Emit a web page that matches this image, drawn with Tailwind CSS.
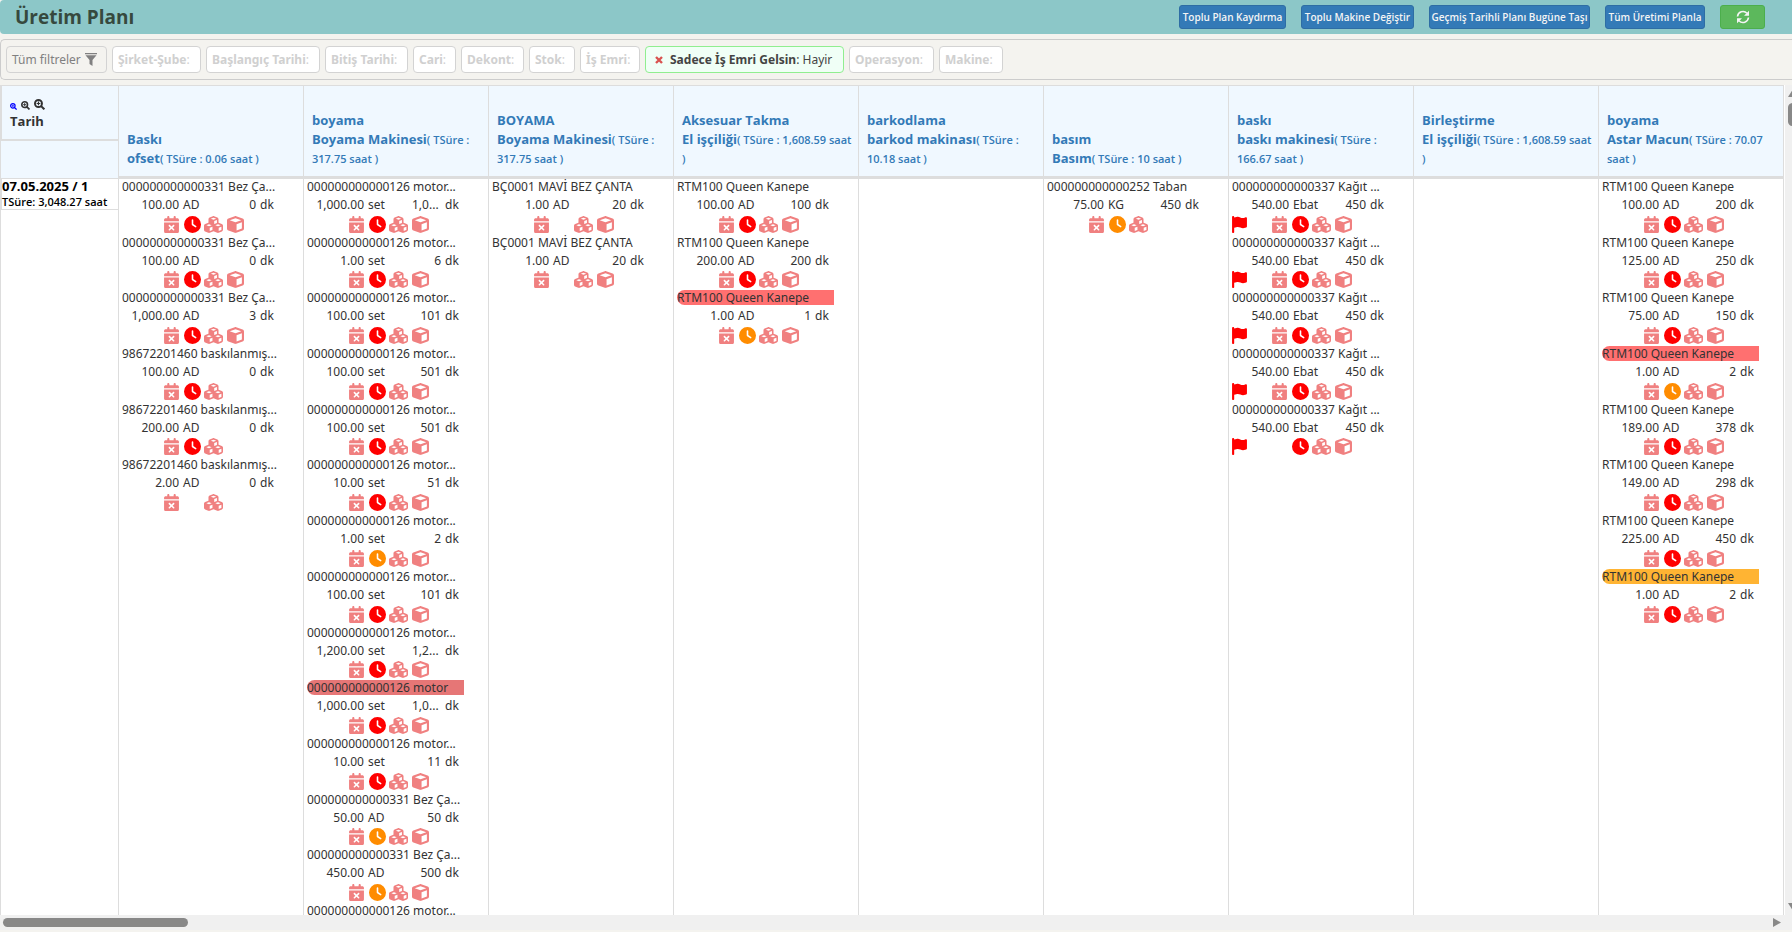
<!DOCTYPE html>
<html lang="tr">
<head>
<meta charset="utf-8">
<title>Üretim Planı</title>
<script src="https://cdn.jsdelivr.net/npm/@tailwindcss/browser@4"></script>
</head>
<body class="bg-[#f4f3ef] text-[#333] font-['Noto_Sans','Open_Sans',sans-serif]">
<svg class="hidden" aria-hidden="true">
  <symbol id="clock" viewBox="0 0 512 512"><path d="M256 0a256 256 0 1 1 0 512A256 256 0 1 1 256 0zM232 120V256c0 8 4 15.500 10.700 20l96 64c11 7.400 25.900 4.400 33.300-6.700s4.400-25.900-6.700-33.300L280 243.200V120c0-13.300-10.700-24-24-24s-24 10.700-24 24z"/></symbol>
  <symbol id="calendar" viewBox="0 0 448 512"><path d="M128 0c17.700 0 32 14.300 32 32V64H288V32c0-17.700 14.300-32 32-32s32 14.300 32 32V64h48c26.500 0 48 21.500 48 48v48H0V112C0 85.500 21.500 64 48 64H96V32c0-17.700 14.300-32 32-32zM0 192H448V464c0 26.500-21.500 48-48 48H48c-26.500 0-48-21.500-48-48V192zM305 305c9.400-9.400 9.400-24.600 0-33.900s-24.600-9.400-33.900 0l-47 47-47-47c-9.400-9.400-24.600-9.400-33.900 0s-9.400 24.600 0 33.900l47 47-47 47c-9.400 9.400-9.400 24.600 0 33.900s24.600 9.400 33.900 0l47-47 47 47c9.400 9.400 24.600 9.400 33.900 0s9.400-24.600 0-33.900l-47-47 47-47z"/></symbol>
  <symbol id="flag" viewBox="0 0 448 512"><path d="M64 32C64 14.300 49.700 0 32 0S0 14.300 0 32V480c0 17.700 14.300 32 32 32s32-14.300 32-32V352l64.300-16.100c41.100-10.300 84.600-5.500 122.500 13.400c44.200 22.100 95.500 24.800 141.700 7.400l34.700-13c12.500-4.700 20.800-16.600 20.800-30V66.100c0-23-24.200-38-44.800-27.700l-9.600 4.800c-46.300 23.200-100.800 23.200-147.100 0c-35.100-17.600-75.400-22-113.500-12.500L64 48V32z"/></symbol>
  <symbol id="cube" viewBox="0 0 512 512"><path d="M234.500 5.700c13.900-5 29.100-5 43.100 0l192 68.600C495 83.400 512 107.500 512 134.600V377.400c0 27-17 51.200-42.500 60.300l-192 68.600c-13.900 5-29.100 5-43.100 0l-192-68.600C17 428.600 0 404.500 0 377.400V134.600c0-27 17-51.200 42.500-60.300l192-68.600zM256 66L82.300 128 256 190l173.700-62L256 66zm32 368.600l160-57.100v-188L288 246.600v188z"/></symbol>
  <symbol id="cubes" viewBox="0 0 576 512"><path d="M290.800 48.600l78.400 29.700L288 109.500 206.800 78.300l78.400-29.700c1.800-.7 3.800-.7 5.700 0zM136 92.500V204.700c-1.300 .4-2.600 .8-3.900 1.300l-96 36.400C14.400 250.600 0 271.500 0 294.700V413.900c0 22.200 13.100 42.300 33.500 51.300l96 42.200c14.400 6.300 30.700 6.300 45.100 0L288 457.500l113.500 49.900c14.400 6.300 30.700 6.300 45.100 0l96-42.200c20.300-8.900 33.500-29.100 33.500-51.300V294.700c0-23.300-14.400-44.100-36.100-52.400l-96-36.400c-1.300-.5-2.600-.9-3.900-1.300V92.500c0-23.300-14.400-44.100-36.100-52.400l-96-36.400c-12.800-4.800-26.900-4.800-39.700 0l-96 36.400C150.400 48.400 136 69.300 136 92.500zM392 210.600l-82.400 31.200V152.600L392 121v89.600zM154.800 250.900l78.400 29.700L152 311.700 70.800 280.600l78.400-29.700c1.800-.7 3.800-.7 5.700 0zm18.800 204.400V354.800L256 323.200v95.900l-82.400 36.200zM421.200 250.900c1.800-.7 3.800-.7 5.700 0l78.400 29.700L424 311.700l-81.200-31.100 78.400-29.700zM523.200 421.200l-77.600 34.100V354.800L528 323.200v90.700c0 3.200-1.900 6-4.800 7.300z"/></symbol>
  <symbol id="zoom" viewBox="0 0 16 16"><path fill="none" stroke="currentColor" stroke-width="3" d="M10 10 15 15"/><circle cx="6.500" cy="6.500" r="5.100" fill="none" stroke="currentColor" stroke-width="2.800"/><path fill="none" stroke="currentColor" stroke-width="1.700" d="M3.800 6.500h5.400M6.500 3.800v5.400"/></symbol>
</svg>

<div class="flex h-screen flex-col overflow-hidden">
  <header class="flex h-[34px] shrink-0 items-center justify-between rounded-l bg-[#8cc7c8] pr-[27px] pl-[15px]">
    <h1 class="font-['Open_Sans',sans-serif] text-[19px] font-bold text-[#36493e]">Üretim Planı</h1>
    <div class="flex gap-[15px] font-['Open_Sans',sans-serif] text-[10px] font-semibold text-[#f4f4f4]">
      <button class="h-6 w-[107px] rounded-[3px] border border-[#2e6da4] bg-[#337ab7] whitespace-nowrap">Toplu Plan Kaydırma</button>
      <button class="h-6 w-[113px] rounded-[3px] border border-[#2e6da4] bg-[#337ab7] whitespace-nowrap">Toplu Makine Değiştir</button>
      <button class="h-6 w-[161px] rounded-[3px] border border-[#2e6da4] bg-[#337ab7] whitespace-nowrap">Geçmiş Tarihli Planı Bugüne Taşı</button>
      <button class="h-6 w-[100px] rounded-[3px] border border-[#2e6da4] bg-[#337ab7] whitespace-nowrap">Tüm Üretimi Planla</button>
      <button aria-label="Yenile" class="flex h-6 w-[45px] items-center justify-center rounded-[3px] border border-[#4cae4c] bg-[#5cb85c]">
        <svg class="size-[14px]" viewBox="0 0 14 14" fill="none" stroke="currentColor" stroke-width="1.600"><path d="M1.500 6.500A5.500 5.500 0 0 1 11 3.300M12.500 7.500A5.500 5.500 0 0 1 3 10.700"/><path fill="currentColor" stroke="none" d="M13 .8v5H8zM1 13.200v-5h5z"/></svg>
      </button>
    </div>
  </header>

  <div class="mt-[5px] flex h-[41px] shrink-0 items-center gap-[5px] rounded-l-[5px] border border-r-0 border-[#ccc] pl-[5px] text-xs whitespace-nowrap text-[#d0d0d0]">
    <button class="flex h-[27px] w-[101px] items-center gap-1 rounded border border-[#d3d3d3] px-[5px] text-[#808080]">Tüm filtreler
      <svg class="h-[13px] w-3 shrink-0" viewBox="0 0 12 13" fill="currentColor"><path d="M0 0h12v1.200H0zM.5 2.200h11L7.500 7v6l-3-2V7z"/></svg>
    </button>
    <button class="h-[27px] w-[89px] rounded border border-[#d3d3d3] bg-white px-[5px] text-left"><b>Şirket-Şube</b>:</button>
    <button class="h-[27px] w-[114px] rounded border border-[#d3d3d3] bg-white px-[5px] text-left"><b>Başlangıç Tarihi</b>:</button>
    <button class="h-[27px] w-[83px] rounded border border-[#d3d3d3] bg-white px-[5px] text-left"><b>Bitiş Tarihi</b>:</button>
    <button class="h-[27px] w-[43px] rounded border border-[#d3d3d3] bg-white px-[5px] text-left"><b>Cari</b>:</button>
    <button class="h-[27px] w-[63px] rounded border border-[#d3d3d3] bg-white px-[5px] text-left"><b>Dekont</b>:</button>
    <button class="h-[27px] w-[46px] rounded border border-[#d3d3d3] bg-white px-[5px] text-left"><b>Stok</b>:</button>
    <button class="h-[27px] w-[60px] rounded border border-[#d3d3d3] bg-white px-[5px] text-left"><b>İş Emri</b>:</button>
    <button class="flex h-[27px] w-[199px] items-center rounded border border-[#90ee90] bg-[#f0fff6] pl-[9px] text-[#444]">
      <svg class="mr-[7px] size-2 shrink-0" viewBox="0 0 8 8" stroke="#d9534f" stroke-width="2.400"><path d="m1 1 6 6M7 1 1 7"/></svg><b>Sadece İş Emri Gelsin</b>:&nbsp;Hayir</button>
    <button class="h-[27px] w-[85px] rounded border border-[#d3d3d3] bg-white px-[5px] text-left"><b>Operasyon</b>:</button>
    <button class="h-[27px] w-[64px] rounded border border-[#d3d3d3] bg-white px-[5px] text-left"><b>Makine</b>:</button>
  </div>

  <main class="mt-[5px] flex min-h-0 flex-1">
    <div class="min-w-0 flex-1 overflow-hidden bg-white">
      <table class="w-[1784px] table-fixed border-separate border-spacing-0 border-t border-[#ddd]">
        <colgroup><col class="w-[118px]"><col class="w-[185px]" span="8"><col class="w-[186px]"></colgroup>
        <thead class="bg-[#f0f8ff] text-left font-['Open_Sans',sans-serif] text-[13px] leading-[19px]">
          <tr id="columns">
            <th class="h-[55px] border-b-2 border-l-2 border-[#ddd] px-2 align-bottom">
              <div class="mb-[2px] flex items-end gap-1">
                <svg class="size-[7px] text-[#00f]"><use href="#zoom"/></svg>
                <svg class="size-[9px]"><use href="#zoom"/></svg>
                <svg class="size-[11px]"><use href="#zoom"/></svg>
              </div>
              <div class="pb-2">Tarih</div>
            </th>
          </tr>
          <tr><td class="h-[38px] border-b border-l border-[#ddd]"></td></tr>
        </thead>
        <tbody>
          <tr id="plan">
            <td class="border-l border-[#ddd] p-0 align-top">
              <div class="h-[31px] border-b border-l border-[#ddd] font-['Open_Sans',sans-serif] font-bold whitespace-nowrap text-black">
                <div class="text-[13px] leading-[15px]">07.05.2025 / 1</div>
                <div class="text-[11px] leading-[15px] font-semibold">TSüre: 3,048.27 saat</div>
              </div>
            </td>
          </tr>
        </tbody>
      </table>
    </div>
    <div class="w-[7px] shrink-0 overflow-hidden bg-[#f0f0f0]">
      <div class="ml-[3px] flex h-full w-[9px] flex-col pt-[5px] pb-[5px]">
        <svg class="h-[7px] w-[9px] shrink-0" viewBox="0 0 9 7" fill="#888"><path d="M4.500 0 9 7H0z"/></svg>
        <div class="mt-[6px] h-[23px] w-[9px] shrink-0 rounded-full bg-[#888]"></div>
        <svg class="mt-auto h-[7px] w-[9px] shrink-0" viewBox="0 0 9 7" fill="#888"><path d="M0 0h9L4.500 7z"/></svg>
      </div>
    </div>
  </main>
  <div class="mb-[2px] flex h-[15px] shrink-0 items-center justify-between bg-[#f0f0f0] pr-[11px] pl-[3px]">
    <div class="h-[9px] w-[185px] rounded-full bg-[#888]"></div>
    <svg class="h-[9px] w-2" viewBox="0 0 8 9" fill="#888"><path d="M0 0 8 4.500 0 9z"/></svg>
  </div>
</div>

<template id="item">
  <div>
    <div data-part="title" class="mb-px h-[15px] w-[157px] overflow-hidden leading-[15px] whitespace-nowrap"></div>
    <div class="flex leading-[1.725] whitespace-nowrap">
      <span data-part="amount" class="flex w-[57px] justify-end"></span>
      <span data-part="unit" class="ml-1 w-[44px]"></span>
      <span data-part="time" class="w-[29px] text-right"></span>
      <span class="ml-1">dk</span>
    </div>
    <div class="flex h-[19px] text-[#f08080]">
      <svg data-part="flag" class="mr-[25px] h-[17px] w-[15px] text-[#f00] [&.invisible]:mr-[27px]" fill="currentColor"><use href="#flag"/></svg>
      <svg data-part="calendar" class="mr-[5px] h-[17px] w-[15px]" fill="currentColor"><use href="#calendar"/></svg>
      <svg data-part="clock" class="mr-[3px] h-[17px] w-[17px]" fill="currentColor"><use href="#clock"/></svg>
      <svg data-part="cubes" class="mr-1 h-[17px] w-[19px]" fill="currentColor"><use href="#cubes"/></svg>
      <svg data-part="cube" class="h-[17px] w-[17px]" fill="currentColor"><use href="#cube"/></svg>
    </div>
  </div>
</template>

<script>
  // Item: title, amount, unit, minutes, icons (f flag, k calendar, r red clock, o orange clock, s cubes, c cube), highlight
  const bez = '000000000000331 Bez Ça...', motor = '000000000000126 motor...', bas = '98672201460 baskılanmış...',
        rtm = 'RTM100 Queen Kanepe', canta = 'BÇ0001 MAVİ BEZ ÇANTA', kagit = '000000000000337 Kağıt ...';
  const columns = [
    { head: ['Baskı', 'ofset', '( TSüre : 0.06 saat )', ''], items: [
      [bez, '100.00', 'AD', '0', 'krsc'], [bez, '100.00', 'AD', '0', 'krsc'], [bez, '1,000.00', 'AD', '3', 'krsc'],
      [bas, '100.00', 'AD', '0', 'krs'], [bas, '200.00', 'AD', '0', 'krs'], [bas, '2.00', 'AD', '0', 'ks']] },
    { head: ['boyama', 'Boyama Makinesi', '( TSüre :', '317.75 saat )'], items: [
      [motor, '1,000.00', 'set', '1,0...', 'krsc'], [motor, '1.00', 'set', '6', 'krsc'], [motor, '100.00', 'set', '101', 'krsc'],
      [motor, '100.00', 'set', '501', 'krsc'], [motor, '100.00', 'set', '501', 'krsc'], [motor, '10.00', 'set', '51', 'krsc'],
      [motor, '1.00', 'set', '2', 'kosc'], [motor, '100.00', 'set', '101', 'krsc'], [motor, '1,200.00', 'set', '1,2...', 'krsc'],
      ['000000000000126 motor', '1,000.00', 'set', '1,0...', 'krsc', 'bg-[#e67676]'], [motor, '10.00', 'set', '11', 'krsc'],
      [bez, '50.00', 'AD', '50', 'kosc'], [bez, '450.00', 'AD', '500', 'kosc'], [motor, '', '', '', '']] },
    { head: ['BOYAMA', 'Boyama Makinesi', '( TSüre :', '317.75 saat )'], items: [
      [canta, '1.00', 'AD', '20', 'ksc'], [canta, '1.00', 'AD', '20', 'ksc']] },
    { head: ['Aksesuar Takma', 'El işçiliği', '( TSüre : 1,608.59 saat', ')'], items: [
      [rtm, '100.00', 'AD', '100', 'krsc'], [rtm, '200.00', 'AD', '200', 'krsc'], [rtm, '1.00', 'AD', '1', 'kosc', 'bg-[#ff7070]']] },
    { head: ['barkodlama', 'barkod makinası', '( TSüre :', '10.18 saat )'], items: [] },
    { head: ['basım', 'Basım', '( TSüre : 10 saat )', ''], items: [
      ['000000000000252 Taban', '75.00', 'KG', '450', 'kos']] },
    { head: ['baskı', 'baskı makinesi', '( TSüre :', '166.67 saat )'], items: [
      [kagit, '540.00', 'Ebat', '450', 'fkrsc'], [kagit, '540.00', 'Ebat', '450', 'fkrsc'], [kagit, '540.00', 'Ebat', '450', 'fkrsc'],
      [kagit, '540.00', 'Ebat', '450', 'fkrsc'], [kagit, '540.00', 'Ebat', '450', 'frsc']] },
    { head: ['Birleştirme', 'El işçiliği', '( TSüre : 1,608.59 saat', ')'], items: [] },
    { head: ['boyama', 'Astar Macun', '( TSüre : 70.07', 'saat )'], items: [
      [rtm, '100.00', 'AD', '200', 'krsc'], [rtm, '125.00', 'AD', '250', 'krsc'], [rtm, '75.00', 'AD', '150', 'krsc'],
      [rtm, '1.00', 'AD', '2', 'kosc', 'bg-[#ff7070]'], [rtm, '189.00', 'AD', '378', 'krsc'], [rtm, '149.00', 'AD', '298', 'krsc'],
      [rtm, '225.00', 'AD', '450', 'krsc'], [rtm, '1.00', 'AD', '2', 'krsc', 'bg-[#ffb433]']] },
  ];
  const iconKeys = { flag: 'f', calendar: 'k', clock: 'ro', cubes: 's', cube: 'c' };
  for (const { head, items } of columns) {
    const th = document.createElement('th');
    th.rowSpan = 2;
    th.className = 'border-l border-b-3 border-[#ddd] pl-2 pb-2 align-bottom whitespace-nowrap text-[#337ab7] last:border-r';
    th.innerHTML = `${head[0]}<br>${head[1]}<span class="text-[11px] font-semibold">${head[2]}${head[3] ? '<br>' + head[3] : ''}</span>`;
    document.getElementById('columns').append(th);

    const td = document.createElement('td');
    td.className = 'border-l border-[#ddd] p-0 pl-[3px] align-top text-xs last:border-r';
    for (const [title, amount, unit, time, icons, mark] of items) {
      const node = document.getElementById('item').content.cloneNode(true);
      const part = name => node.querySelector(`[data-part=${name}]`);
      part('title').textContent = title;
      if (mark) part('title').classList.add(mark, 'rounded-l-lg');
      part('amount').textContent = amount;
      part('unit').textContent = unit;
      part('time').textContent = time;
      if (time.includes('.')) part('time').classList.replace('text-right', 'text-left');
      for (const [name, keys] of Object.entries(iconKeys)) {
        if (![...keys].some(k => icons.includes(k))) part(name).classList.add('invisible');
      }
      part('clock').classList.add(icons.includes('o') ? 'text-[#ff8c00]' : 'text-[#f00]');
      td.append(node);
    }
    document.getElementById('plan').append(td);
  }
</script>
</body>
</html>
